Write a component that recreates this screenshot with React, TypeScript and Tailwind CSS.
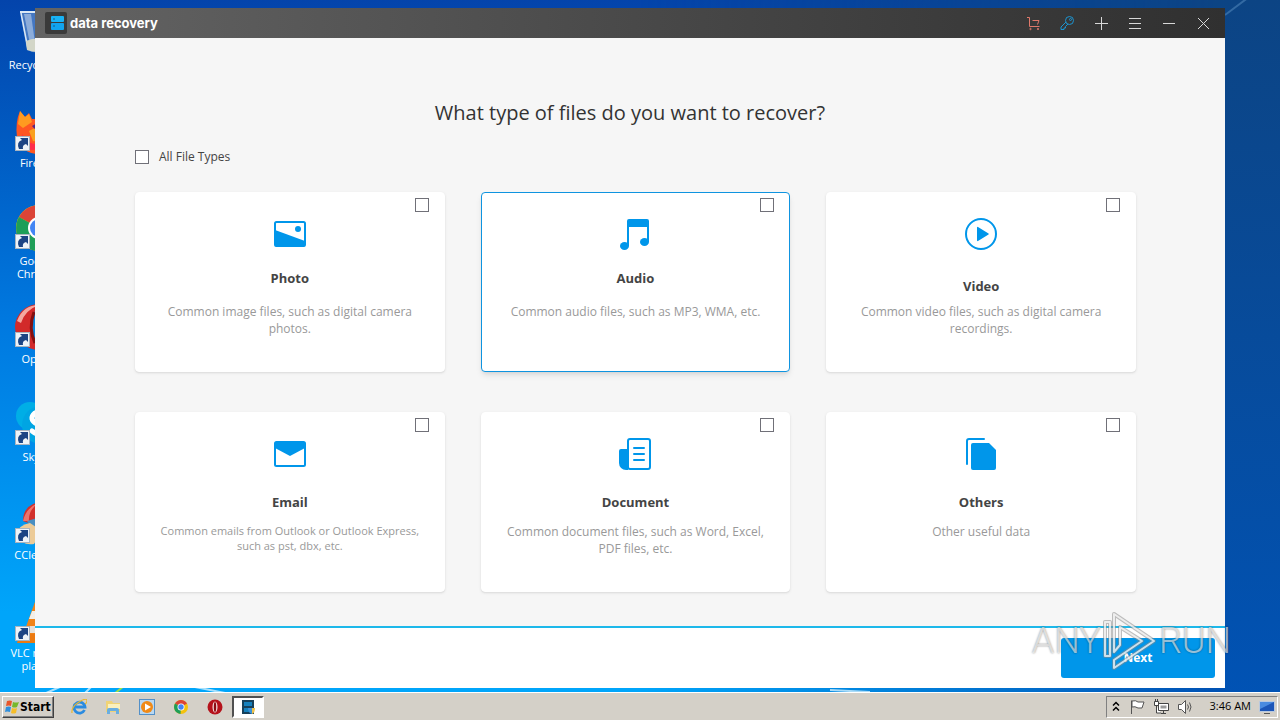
import { useState } from 'react';
import type { ReactNode } from 'react';
import clsx from 'clsx';

interface FileType {
  id: string;
  title: string;
  description: string;
  icon: ReactNode;
  titleAlign: string;
  textSize: string;
  highlighted?: boolean;
}

const fileTypes: FileType[] = [
  {
    id: 'photo',
    title: 'Photo',
    description: 'Common image files, such as digital camera photos.',
    titleAlign: 'items-start',
    textSize: 'text-[12px] leading-[17px]',
    icon: (
      <>
        <rect x="1" y="4" width="30" height="24" rx="1.5" fill="none" stroke="currentColor" strokeWidth="2" />
        <path d="M1 12l30 11v4a2 2 0 0 1-2 2H3a2 2 0 0 1-2-2z" />
        <circle cx="24" cy="11" r="3" />
      </>
    )
  },
  {
    id: 'audio',
    title: 'Audio',
    description: 'Common audio files, such as MP3, WMA, etc.',
    titleAlign: 'items-start',
    textSize: 'text-[12px] leading-[17px]',
    highlighted: true,
    icon: (
      <>
        <path d="M8 28V3a2 2 0 0 1 2-2h18a2 2 0 0 1 2 2v21h-2V9H10v19z" />
        <ellipse cx="5.500" cy="28" rx="4.500" ry="4" />
        <ellipse cx="25.500" cy="24" rx="4.500" ry="4" />
      </>
    )
  },
  {
    id: 'video',
    title: 'Video',
    description: 'Common video files, such as digital camera recordings.',
    titleAlign: 'items-end',
    textSize: 'text-[12px] leading-[17px]',
    icon: (
      <>
        <circle cx="16" cy="16" r="15" fill="none" stroke="currentColor" strokeWidth="2" />
        <path d="M12 9.500v13a.6.6 0 0 0 1 .5l10.500-6.500a.6.6 0 0 0 0-1L13 9a.6.6 0 0 0-1 .5z" />
      </>
    )
  },
  {
    id: 'email',
    title: 'Email',
    description: 'Common emails from Outlook or Outlook Express, such as pst, dbx, etc.',
    titleAlign: 'items-center',
    textSize: 'text-[11px] leading-[15px]',
    icon: (
      <>
        <rect x="1" y="4" width="30" height="24" rx="1.5" fill="none" stroke="currentColor" strokeWidth="2" />
        <path d="M1 4h30v6l-15 8L1 10z" />
      </>
    )
  },
  {
    id: 'document',
    title: 'Document',
    description: 'Common document files, such as Word, Excel, PDF files, etc.',
    titleAlign: 'items-center',
    textSize: 'text-[12px] leading-[17px]',
    icon: (
      <>
        <rect x="9" y="1" width="22" height="30" rx="2" fill="none" stroke="currentColor" strokeWidth="2" />
        <path d="M9 11v21H7a7 7 0 0 1-7-7V13a2 2 0 0 1 2-2z" />
        <path d="M15 10h10M15 16h10M15 22h10" fill="none" stroke="currentColor" strokeWidth="2" strokeLinecap="round" />
      </>
    )
  },
  {
    id: 'others',
    title: 'Others',
    description: 'Other useful data',
    titleAlign: 'items-center',
    textSize: 'text-[12px] leading-[17px]',
    icon: (
      <>
        <path d="M2 26V3a2 2 0 0 1 2-2h15" fill="none" stroke="currentColor" strokeWidth="2" strokeLinecap="round" />
        <path d="M8 5h16l7 7v18a2 2 0 0 1-2 2H8a2 2 0 0 1-2-2V7a2 2 0 0 1 2-2z" />
      </>
    )
  }
];

const desktopIcons: { label: string; shortcut: boolean; art: ReactNode }[] = [
  {
    label: 'Recycle Bin',
    shortcut: false,
    art: (
      <>
        <path d="M6 3h34l-6 38q-11 5-21 0z" fill="#6f98cf" fillOpacity=".6" />
        <path d="M6 3h34" stroke="#dbe8f5" strokeWidth="2" />
        <path d="M7 4l7 36" stroke="#dbe8f5" strokeWidth="1.5" />
        <path d="M10 5l6 30 5-1-4-29z" fill="#e4eef8" opacity=".45" />
        <path d="M12 32q10-5 22 0l-1 9q-10 4-20 0z" fill="#d3d6c8" />
      </>
    )
  },
  {
    label: 'Firefox',
    shortcut: true,
    art: (
      <>
        <path d="M6 4l5 6 4-4 3 6h14q14 5 13 20-3 15-20 15T3 31Q1 15 6 4z" fill="#ff5722" />
        <path d="M6 4l5 6 4-3 3 8-9 6-5-4z" fill="#ff9b20" />
        <path d="M15 24q8-6 18 0-2 12-14 10z" fill="#f9a01f" />
        <path d="M18 19q6-5 14-2v6q-8 4-14-4z" fill="#5b2480" />
        <path d="M8 27q6 12 20 10-10 12-20 0z" fill="#ff2d4b" />
      </>
    )
  },
  {
    label: 'Google Chrome',
    shortcut: true,
    art: (
      <>
        <circle cx="25" cy="23" r="23" fill="#f4c20d" />
        <path d="M25 23L5 12a23 23 0 0 1 40 0z" fill="#db4437" />
        <path d="M25 23L5 12a23 23 0 0 0 18 34z" fill="#1e9e58" />
        <circle cx="25" cy="23" r="11" fill="#fff" />
        <circle cx="25" cy="23" r="9" fill="#4285f4" />
      </>
    )
  },
  {
    label: 'Opera',
    shortcut: true,
    art: (
      <>
        <ellipse cx="25" cy="24" rx="24" ry="23" fill="#d22a2a" />
        <path d="M3 18Q9 2 25 2q-14 5-18 18z" fill="#f4a8a0" />
        <ellipse cx="26" cy="24" rx="9" ry="19" fill="#0a86e0" />
        <path d="M20 9q-6 16 1 31" fill="none" stroke="#84100f" strokeWidth="3" />
      </>
    )
  },
  {
    label: 'Skype',
    shortcut: true,
    art: (
      <>
        <circle cx="16" cy="15" r="14" fill="#00aee6" />
        <circle cx="27" cy="24" r="19" fill="#00a5e3" />
        <path d="M34 14q-7-6-13-2-7 6 2 11 12 3 9 8-5 6-14-1" fill="none" stroke="#fff" strokeWidth="5" strokeLinecap="round" />
      </>
    )
  },
  {
    label: 'CCleaner',
    shortcut: true,
    art: (
      <>
        <path d="M9 22q0-18 22-20l10 20-18 5z" fill="#d2302c" />
        <path d="M9 22q3-13 15-18-10 8-9 18z" fill="#ec746c" />
        <path d="M13 22l17-5 5 8-17 5z" fill="#4a8fc2" />
        <path d="M2 36q2-10 14-12l12 8-8 13q-12 2-18-9z" fill="#eccb98" />
      </>
    )
  },
  {
    label: 'VLC media player',
    shortcut: true,
    art: (
      <>
        <path d="M22 2h6l13 36H9z" fill="#f08419" />
        <path d="M18 14h14l3 8H15z" fill="#f3efe8" />
        <path d="M12 29h26l3 7H10z" fill="#e6e2dc" />
        <path d="M6 37h38l2 9H3z" fill="#ec7a11" />
      </>
    )
  }
];

const strokeIcon = 'h-[17px] w-[17px] fill-none stroke-current';

const windowActions: { label: string; color: string; art: ReactNode }[] = [
  {
    label: 'Buy',
    color: 'text-[#e0796b]',
    art: (
      <>
        <path d="M2 2.500h2.500v9h10M7.500 5.500h6.500l-1.500 4" />
        <circle cx="5.500" cy="14" r=".7" />
        <circle cx="13" cy="14" r=".7" />
      </>
    )
  },
  {
    label: 'Register',
    color: 'text-[#1c94d0]',
    art: (
      <>
        <circle cx="10.500" cy="5.500" r="4" />
        <circle cx="11.500" cy="4.500" r="1" />
        <path d="M7 7l-5 5v2.500h3V13h1.500v-1.500l2.500-2.500" />
      </>
    )
  },
  { label: 'Add', color: 'text-[#d8d8d8]', art: <path d="M8.500 2v13M2 8.500h13" /> },
  { label: 'Menu', color: 'text-[#d8d8d8]', art: <path d="M2 3.500h12M2 8.500h12M2 13.500h12" /> },
  { label: 'Minimize', color: 'text-[#d8d8d8]', art: <path d="M2 8.500h12" /> },
  { label: 'Close', color: 'text-[#d8d8d8]', art: <path d="M3 3l11 11M14 3L3 14" /> }
];

const quickLaunch: { label: string; art: ReactNode }[] = [
  {
    label: 'Internet Explorer',
    art: (
      <>
        <path d="M13.500 11a5.500 5.500 0 1 1 .5-3H4.500" fill="none" stroke="#2a8be0" strokeWidth="2.800" />
        <path d="M1 14Q0 8 8 3t8-1q0 2-2 3" fill="none" stroke="#e8b730" strokeWidth="1.200" />
      </>
    )
  },
  {
    label: 'Explorer',
    art: (
      <>
        <path d="M1 2h6l1 2h7v9H1z" fill="#f0d376" />
        <path d="M3 5h12v5H3z" fill="#fbf0bd" />
        <path d="M2 15v-4q0-2 2-2h8q2 0 2 2v4h-3v-3H5v3z" fill="#6aaee0" />
      </>
    )
  },
  {
    label: 'Media Player',
    art: (
      <>
        <rect x=".5" y=".5" width="15" height="15" fill="#b9d8f2" stroke="#5390c8" />
        <circle cx="8" cy="8" r="6" fill="#f08a18" />
        <path d="M6 4.500v7L12 8z" fill="#fff" />
      </>
    )
  },
  {
    label: 'Chrome',
    art: (
      <>
        <circle cx="8" cy="8" r="7" fill="#f4c20d" />
        <path d="M8 8L2 4.500a7 7 0 0 1 12 0z" fill="#db4437" />
        <path d="M8 8L2 4.500A7 7 0 0 0 7.500 15z" fill="#1e9e58" />
        <circle cx="8" cy="8" r="3.500" fill="#fff" />
        <circle cx="8" cy="8" r="2.700" fill="#4285f4" />
      </>
    )
  },
  {
    label: 'Opera',
    art: (
      <>
        <circle cx="8" cy="8" r="7.500" fill="#b5121b" />
        <ellipse cx="8" cy="8" rx="2.500" ry="5.500" fill="#f4dcdc" />
        <ellipse cx="8" cy="8" rx="1.200" ry="5" fill="#8b0c12" />
      </>
    )
  }
];

const checkboxClass =
  'h-3.5 w-3.5 shrink-0 appearance-none border border-[#707078] bg-white checked:bg-[#0096ea]';

function DesktopIcon({ label, shortcut, art }: { label: string; shortcut: boolean; art: ReactNode }) {
  return (
    <button className="flex h-[98px] w-[75px] flex-col items-center text-[11px] leading-[13px] text-white">
      <svg viewBox="0 0 48 48" className="mb-px h-12 w-12 shrink-0">
        {art}
        {shortcut && (
          <>
            <rect x="1.500" y="29.500" width="14" height="14" fill="#eef3f8" stroke="#a9b4c0" />
            <path d="M5 42q-3-7 3-9l-2-2h8v8l-2-2q-4 1-3 5z" fill="#1c4484" />
          </>
        )}
      </svg>
      <span className="w-[62px] text-center">{label}</span>
    </button>
  );
}

function Wallpaper() {
  return (
    <div className="absolute inset-0 -z-10 bg-linear-to-b from-[#0444ab] via-[#0079e0] via-45% to-[#00a5fa] to-85%">
      <div className="absolute inset-0 bg-linear-to-b from-[#0c4484] to-[#0053b6] [mask-image:linear-gradient(to_right,transparent_50%,black_95%)]" />
      <svg viewBox="0 0 1280 720" preserveAspectRatio="none" className="absolute inset-0 h-full w-full fill-none">
        <path d="M1225 15l24-18" stroke="#4f83b8" strokeWidth="2" opacity=".6" />
        <path d="M44 694l18-8M84 694l8-8M230 694q-20-4-40-8M830 690l40 2" stroke="#d5f0fc" strokeWidth="2" opacity=".8" />
        <path d="M114 694l10-8" stroke="#9be04a" strokeWidth="2" />
      </svg>
    </div>
  );
}

function TitleBar() {
  return (
    <header className="flex h-[30px] shrink-0 items-center bg-linear-to-r from-[#646464] to-[#303030] pl-2.5 pr-[5px]">
      <svg viewBox="0 0 22 22" className="h-[22px] w-[22px]">
        <rect width="22" height="22" rx="2" fill="#3a3a3a" />
        <rect x="6" y="4" width="13" height="6" rx="1" fill="#19b2f5" />
        <rect x="6" y="11" width="13" height="7" rx="1" fill="#12a4ee" />
        <path d="M8 7h2M8 14h2" stroke="#0b5f92" />
      </svg>
      <h1 className="ml-[3px] pt-0.5 font-['Inter',sans-serif] text-[13px] font-bold text-white">data recovery</h1>
      <div className="ml-auto flex">
        {windowActions.map((action) => (
          <button
            key={action.label}
            aria-label={action.label}
            className={clsx('flex h-[30px] w-[34px] items-center justify-center', action.color)}
          >
            <svg viewBox="0 0 17 17" className={strokeIcon}>{action.art}</svg>
          </button>
        ))}
      </div>
    </header>
  );
}

function FileTypeCard({ type, checked, onToggle }: { type: FileType; checked: boolean; onToggle: () => void }) {
  return (
    <label
      className={clsx(
        'flex h-[180px] flex-col items-center rounded border bg-white',
        type.highlighted ? 'border-[#0f94e0] shadow-md' : 'border-white shadow'
      )}
    >
      <input
        type="checkbox"
        checked={checked}
        onChange={onToggle}
        className={clsx(checkboxClass, 'mr-[15px] mt-[5px] self-end')}
      />
      <svg viewBox="0 0 32 32" className="mt-1.5 h-8 w-8 shrink-0 fill-current text-[#0096ea]">
        {type.icon}
      </svg>
      <span className={clsx('mt-[18px] flex h-7 text-[13px] font-bold leading-5 text-[#444]', type.titleAlign)}>
        {type.title}
      </span>
      <span className={clsx('mt-[7px] w-[270px] text-center text-[#999]', type.textSize)}>{type.description}</span>
    </label>
  );
}

function Watermark() {
  return (
    <div className="pointer-events-none absolute -right-1.5 bottom-4 flex h-[62px] items-center gap-px font-['Roboto',sans-serif] text-[36px] font-light leading-none text-white/60 [text-shadow:0_0_2px_#0007]">
      <span>ANY</span>
      <svg viewBox="0 0 56 62" className="h-[62px] w-14 fill-none" strokeLinejoin="round">
        <path d="M3 46V12h5v34zM12 42V4l40 27-40 27v-8l28-19-22-14v18z" stroke="#8888" strokeWidth="4" />
        <path d="M3 46V12h5v34zM12 42V4l40 27-40 27v-8l28-19-22-14v18z" stroke="#fffb" strokeWidth="2" />
      </svg>
      <span>RUN</span>
    </div>
  );
}

function Taskbar() {
  return (
    <footer className="flex h-7 shrink-0 items-center border-t border-white bg-[#d4d0c8] px-0.5 text-[11px] text-black">
      <button className="flex h-[22px] w-[52px] items-center border border-b-[#404040] border-l-white border-r-[#404040] border-t-white px-px font-['DejaVu_Sans_Condensed','DejaVu_Sans',sans-serif] text-[12px] font-bold shadow-[inset_-1px_-1px_#808080]">
        <svg viewBox="0 0 16 16" className="h-4 w-4 shrink-0">
          <path d="M3 2q3-1 5 0L7 7Q5 6 2 7z" fill="#e8562a" />
          <path d="M9 3q3 1 6 0l-2 5q-2 1-5 0z" fill="#76b82c" />
          <path d="M2 8q3-1 5 0l-1 5q-3-1-5 0z" fill="#2f8fdc" />
          <path d="M8 9q3 1 5 0l-1 5q-3 1-5 0z" fill="#f6bd27" />
        </svg>
        Start
      </button>
      <nav className="ml-2 flex">
        {quickLaunch.map((app) => (
          <button key={app.label} aria-label={app.label} className="flex h-[22px] w-[34px] items-center justify-center">
            <svg viewBox="0 0 16 16" className="h-4 w-4">{app.art}</svg>
          </button>
        ))}
      </nav>
      <button
        aria-label="data recovery"
        className="flex h-[22px] w-8 items-center justify-center border-2 border-b-white border-l-[#505050] border-r-white border-t-[#505050] bg-white"
      >
        <svg viewBox="0 0 16 16" className="h-4 w-4">
          <rect x="2" y="1" width="12" height="14" fill="#17405a" />
          <path d="M4 3h8v4H4zM4 9h8v4H4z" fill="#1681bd" />
          <path d="M8 9h4v6q-4-1-4-6z" fill="#3c91d8" />
          <path d="M12 9h3q0 5-3 6z" fill="#edc14c" />
        </svg>
      </button>
      <div className="ml-auto flex h-[22px] w-[172px] items-center border border-b-white border-l-[#808080] border-r-white border-t-[#808080] pl-1">
        <svg viewBox="0 0 10 16" className="h-4 w-2.5 fill-none stroke-black">
          <path d="M2 6.500l3-3 3 3M2 11.500l3-3 3 3" strokeWidth="1.500" />
        </svg>
        <svg viewBox="0 0 16 16" className="ml-2 h-4 w-4 fill-white stroke-[#555]">
          <path d="M2.500 15V1.500M3 2q4-1 6 1h6l-2 6H9Q6 7 3 8z" />
        </svg>
        <svg viewBox="0 0 16 16" className="ml-2 h-4 w-4 fill-white stroke-[#444]">
          <path d="M5.500 4.500h10v7h-10zM8 14.500h5M10.500 12v2M1.500 2.500h4v4h-4zM2.500 0v2M4.500 0v2M3.500 7v7H8" />
          <path d="M7.500 6.500h6v3h-6z" fill="#999" stroke="none" />
        </svg>
        <svg viewBox="0 0 16 16" className="ml-2 h-4 w-4 fill-white stroke-[#555]">
          <path d="M1.500 5.500h3l4-4v13l-4-4h-3z" />
          <path d="M10.500 5.500q2 2.500 0 5M12.500 3.500q3 4.500 0 9" fill="none" />
        </svg>
        <time className="ml-auto">3:46 AM</time>
        <svg viewBox="0 0 16 16" className="ml-2 mr-0.5 h-4 w-4">
          <rect x=".5" y="2.500" width="15" height="10" fill="#1c56b8" stroke="#b9c9de" />
          <path d="M1 3h14L1 10z" fill="#4a8be0" />
          <path d="M5 14.500h6" stroke="#555" />
        </svg>
      </div>
    </footer>
  );
}

export default function App() {
  const [selected, setSelected] = useState<string[]>([]);
  const allSelected = selected.length === fileTypes.length;

  const toggle = (id: string) => {
    setSelected(selected.includes(id) ? selected.filter((item) => item !== id) : [...selected, id]);
  };

  return (
    <div className="relative flex min-h-screen flex-col font-['Open_Sans',sans-serif]">
      <Wallpaper />
      <div className="absolute left-0 top-[9px] flex flex-col">
        {desktopIcons.map((icon) => (
          <DesktopIcon key={icon.label} {...icon} />
        ))}
      </div>

      <div className="relative mb-1 ml-[35px] mr-[55px] mt-2 flex flex-1 flex-col bg-[#f6f6f6]">
        <TitleBar />
        <main className="flex-1 pb-[34px] pt-[61px]">
          <h2 className="text-center text-[20px] leading-7 text-[#333]">What type of files do you want to recover?</h2>
          <div className="pl-[100px] pr-[89px] pt-5">
            <label className="flex h-5 w-fit items-center gap-2.5 text-[12px] text-[#444]">
              <input
                type="checkbox"
                checked={allSelected}
                onChange={() => setSelected(allSelected ? [] : fileTypes.map((type) => type.id))}
                className={checkboxClass}
              />
              All File Types
            </label>
            <div className="mt-[25px] grid grid-cols-3 gap-x-9 gap-y-10">
              {fileTypes.map((type) => (
                <FileTypeCard
                  key={type.id}
                  type={type}
                  checked={selected.includes(type.id)}
                  onToggle={() => toggle(type.id)}
                />
              ))}
            </div>
          </div>
        </main>
        <div className="flex h-[62px] shrink-0 items-center justify-end border-t-2 border-[#1db8ea] bg-white pr-2.5">
          <button className="h-10 w-[154px] rounded-[3px] bg-[#0096ea] text-[12px] font-bold text-white">Next</button>
        </div>
        <Watermark />
      </div>

      <Taskbar />
    </div>
  );
}
